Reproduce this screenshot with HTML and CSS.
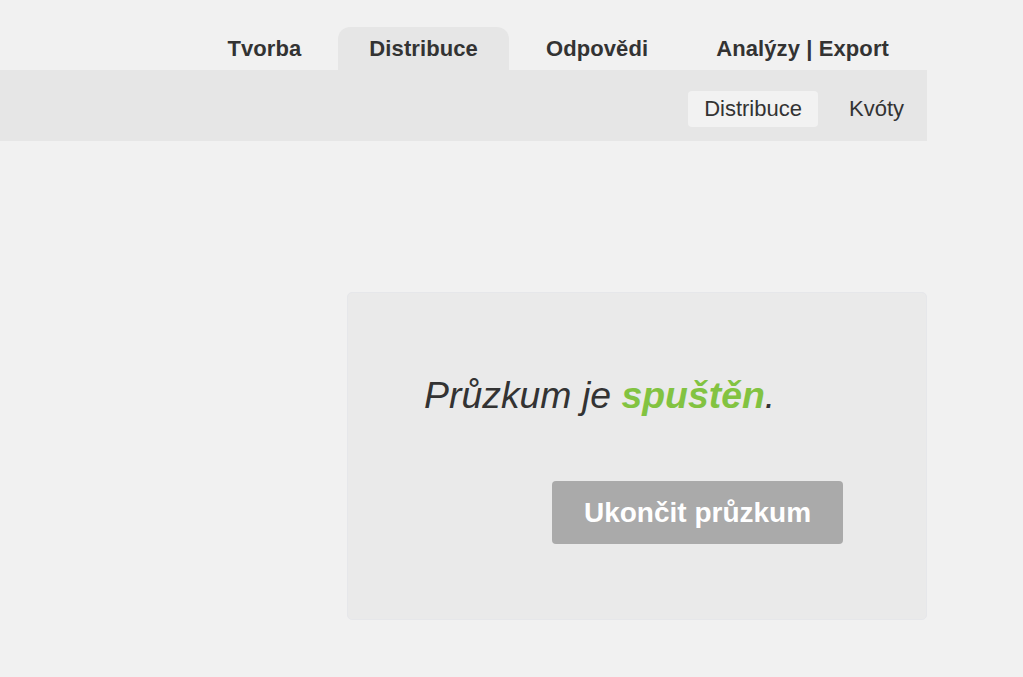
FILE: index.html
```html
<!DOCTYPE html>
<html lang="cs">
<head>
<meta charset="utf-8">
<title>Distribuce</title>
<link rel="stylesheet" href="styles.css">
</head>
<body>
<div class="page">
  <nav class="tabs">
    <a class="tab">Tvorba</a>
    <a class="tab active">Distribuce</a>
    <a class="tab">Odpovědi</a>
    <a class="tab">Analýzy | Export</a>
  </nav>
  <div class="subbar">
    <a class="subtab active">Distribuce</a>
    <a class="subtab">Kvóty</a>
  </div>
  <main class="main">
    <section class="card">
      <p class="status">Průzkum je <strong class="ok">spuštěn</strong>.</p>
      <div class="actions">
        <button class="btn">Ukončit průzkum</button>
      </div>
    </section>
  </main>
</div>
</body>
</html>
```

FILE: styles.css
```css
html, body {
  margin: 0;
  padding: 0;
  background: #f1f1f1;
  font-family: "Liberation Sans", Arial, sans-serif;
  color: #333333;
}
.page {
  width: 927px;
}
.tabs {
  display: flex;
  justify-content: flex-end;
  gap: 6px;
  padding: 27px 7px 0 0;
}
.tab {
  display: block;
  height: 43px;
  line-height: 43px;
  padding: 0 31px;
  font-size: 22px;
  letter-spacing: 0.1px;
  font-weight: bold;
  color: #333333;
  border-radius: 12px 12px 0 0;
}
.tab.active {
  background: #e6e6e6;
}
.subbar {
  display: flex;
  justify-content: flex-end;
  align-items: flex-start;
  gap: 15px;
  background: #e6e6e6;
  height: 71px;
  box-sizing: border-box;
  padding: 21px 7px 0 0;
}
.subtab {
  display: block;
  height: 36px;
  line-height: 36px;
  padding: 0 16px;
  font-size: 22px;
  color: #333333;
  border-radius: 4px;
}
.subtab.active {
  background: #f2f2f2;
}
.main {
  display: flex;
  justify-content: flex-end;
  padding-top: 151px;
}
.card {
  width: 580px;
  height: 328px;
  box-sizing: border-box;
  background: #eaeaea;
  border: 1px solid #e6e7ea;
  border-radius: 5px;
  padding: 78px 0 0 76px;
}
.status {
  margin: 0;
  font-size: 37.4px;
  font-style: italic;
  line-height: 48px;
  color: #333333;
}
.ok {
  color: #82c341;
  font-weight: bold;
}
.actions {
  display: flex;
  padding: 62px 0 0 128px;
}
.btn {
  width: 291px;
  height: 63px;
  border: none;
  border-radius: 4px;
  background: #aaaaaa;
  color: #ffffff;
  font-family: "Liberation Sans", Arial, sans-serif;
  font-size: 28px;
  font-weight: bold;
  padding: 0;
  cursor: pointer;
}
```
